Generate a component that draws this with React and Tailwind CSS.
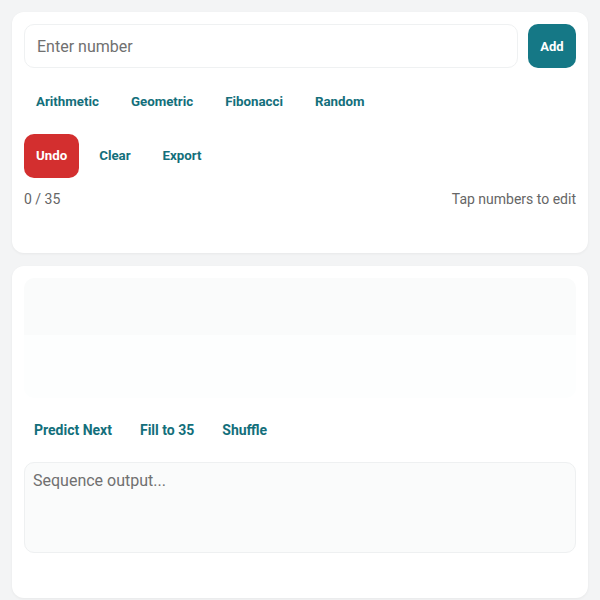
import { useState } from 'react'

const generators = ['Arithmetic', 'Geometric', 'Fibonacci', 'Random']
const tools = ['Predict Next', 'Fill to 35', 'Shuffle']

export default function App() {
  const [value, setValue] = useState('')
  const [output, setOutput] = useState('')

  return (
    <div className="min-h-[600px] bg-[#f3f4f5] p-3 font-['Roboto',sans-serif]">
      {/* Input card */}
      <div className="rounded-xl bg-white p-3 shadow-[0_1px_3px_rgba(0,0,0,0.05)]">
        <div className="flex gap-2.5">
          <input
            value={value}
            onChange={(e) => setValue(e.target.value)}
            placeholder="Enter number"
            className="h-11 min-w-0 flex-1 rounded-[10px] border border-[#eff1f2] bg-white px-3 text-base text-[#333] outline-none placeholder:text-[#707070]"
          />
          <button className="h-11 w-12 rounded-[10px] bg-[#157886] pt-0.5 text-[13px] font-bold text-white">
            Add
          </button>
        </div>

        <div className="mt-3 flex gap-2">
          {generators.map((label) => (
            <button key={label} className="h-11 rounded-[10px] px-3 text-[13.3px] font-bold text-[#136f7b]">
              {label}
            </button>
          ))}
        </div>

        <div className="mt-2.5 flex gap-2">
          <button className="h-11 rounded-[10px] bg-[#d32f2f] px-3 text-[13.3px] font-bold text-white">
            Undo
          </button>
          <button className="h-11 rounded-[10px] px-3 text-[13.3px] font-bold text-[#136f7b]">Clear</button>
          <button className="h-11 rounded-[10px] px-3 text-[13.3px] font-bold text-[#136f7b]">Export</button>
        </div>

        <div className="mt-[11px] flex justify-between text-sm text-[#666]">
          <span>0 / 35</span>
          <span>Tap numbers to edit</span>
        </div>

        {/* numbers grid (empty) */}
        <div className="h-8" />
      </div>

      {/* Output card */}
      <div className="mt-[13px] rounded-xl bg-white p-3 pb-[45px] shadow-[0_1px_3px_rgba(0,0,0,0.05)]">
        <div className="flex h-[120px] flex-col overflow-hidden rounded-[10px]">
          <div className="h-[57px] bg-[#fafbfb]" />
          <div className="flex-1 bg-[#fdfefe]" />
        </div>

        <div className="mt-2.5 flex gap-2">
          {tools.map((label) => (
            <button key={label} className="h-11 rounded-[10px] px-2.5 text-[14px] font-bold text-[#136f7b]">
              {label}
            </button>
          ))}
        </div>

        <textarea
          value={output}
          onChange={(e) => setOutput(e.target.value)}
          placeholder="Sequence output..."
          className="mt-2.5 block h-[91px] w-full resize-none rounded-[10px] border border-[#eef0f1] bg-[#fafbfb] px-2 py-1.5 text-base text-[#333] outline-none placeholder:text-[#707070]"
        />
      </div>
    </div>
  )
}
